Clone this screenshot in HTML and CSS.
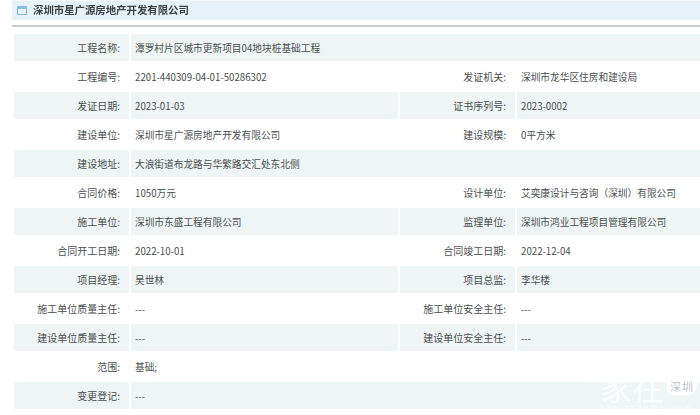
FILE: index.html
```html
<!DOCTYPE html>
<html lang="zh">
<head>
<meta charset="utf-8">
<title>深圳市星广源房地产开发有限公司</title>
<link rel="stylesheet" href="styles.css">
</head>
<body>
<div class="page">
  <header class="head">
    <svg class="icon" width="10" height="9" viewBox="0 0 10 9"><rect x="0" y="0" width="10" height="9" rx="1" fill="#7fbfe6"/><rect x="1" y="3" width="8" height="5" fill="#eef2f5"/></svg>
    <h1 class="title">深圳市星广源房地产开发有限公司</h1>
  </header>
  <div class="rule"></div>
  <table class="info">
    <colgroup><col class="c-l"><col class="c-v"><col class="c-l"><col></colgroup>
    <tbody>
      <tr><th>工程名称:</th><td colspan="3">潭罗村片区城市更新项目04地块桩基础工程</td></tr>
      <tr><th>工程编号:</th><td>2201-440309-04-01-50286302</td><th>发证机关:</th><td>深圳市龙华区住房和建设局</td></tr>
      <tr><th>发证日期:</th><td>2023-01-03</td><th>证书序列号:</th><td>2023-0002</td></tr>
      <tr><th>建设单位:</th><td>深圳市星广源房地产开发有限公司</td><th>建设规模:</th><td>0平方米</td></tr>
      <tr><th>建设地址:</th><td colspan="3">大浪街道布龙路与华繁路交汇处东北侧</td></tr>
      <tr><th>合同价格:</th><td>1050万元</td><th>设计单位:</th><td>艾奕康设计与咨询（深圳）有限公司</td></tr>
      <tr><th>施工单位:</th><td>深圳市东盛工程有限公司</td><th>监理单位:</th><td>深圳市鸿业工程项目管理有限公司</td></tr>
      <tr><th>合同开工日期:</th><td>2022-10-01</td><th>合同竣工日期:</th><td>2022-12-04</td></tr>
      <tr><th>项目经理:</th><td>吴世林</td><th>项目总监:</th><td>李华楼</td></tr>
      <tr><th>施工单位质量主任:</th><td>---</td><th>施工单位安全主任:</th><td>---</td></tr>
      <tr><th>建设单位质量主任:</th><td>---</td><th>建设单位安全主任:</th><td>---</td></tr>
      <tr><th>范围:</th><td colspan="3">基础;</td></tr>
      <tr><th>变更登记:</th><td colspan="3">---</td></tr>
    </tbody>
  </table>
  <div class="mark">
    <div class="mark-top">
      <span class="mark-main">家在</span>
      <span class="mark-city">深圳</span>
    </div>
    <span class="mark-url">bbs.szhome.com</span>
  </div>
</div>
</body>
</html>
```
FILE: styles.css
```css
html, body {
  margin: 0;
  padding: 0;
  background: #fff;
}
.page {
  position: relative;
  width: 700px;
  height: 415px;
  overflow: hidden;
  font-family: "Noto Sans CJK SC", "Liberation Sans", sans-serif;
  color: #4a4f50;
}
.head {
  display: flex;
  align-items: center;
  gap: 6px;
  height: 20px;
  margin-left: 12px;
  padding-left: 5px;
  background: #e6f1f9;
  box-shadow: inset 0 1px 0 #f2f8fc;
}
.icon {
  flex: none;
}
.title {
  margin: 0;
  font-size: 10.4px;
  font-weight: 700;
  color: #3c4244;
  line-height: 16px;
  filter: blur(.25px);
}
.rule {
  height: 2px;
  margin: 5px 0 0 12px;
  background: #c9cccc;
}
.info {
  width: 690px;
  margin: 5px 0 0 12px;
  border-collapse: separate;
  border-spacing: 2px;
  table-layout: fixed;
  font-size: 9.7px;
}
.c-l { width: 115px; }
.c-v { width: 267px; }
.info th, .info td {
  height: 27px;
  padding: 0;
  font-weight: 400;
  white-space: nowrap;
}
.info th {
  text-align: right;
  padding-right: 9px;
  box-sizing: border-box;
  font-size: 10px;
}
.info td {
  padding-left: 4px;
}
.info tr:nth-child(odd) th,
.info tr:nth-child(odd) td {
  background: #eef5f4;
}
.mark {
  position: absolute;
  left: 600px;
  top: 368px;
  width: 98px;
  color: #fff;
}
.mark-top {
  display: flex;
  align-items: center;
  gap: 3px;
}
.mark-main {
  font-size: 32px;
  line-height: 36px;
  opacity: .85;
}
.mark-city {
  padding: 2px 3px;
  border-radius: 6px 6px 10px 6px;
  background: #fff;
  color: #bcc4c4;
  font-size: 11px;
  line-height: 14px;
  letter-spacing: 1px;
  white-space: nowrap;
}
.mark-url {
  display: block;
  font-family: "Liberation Sans", sans-serif;
  font-size: 9px;
  line-height: 8px;
  letter-spacing: 1.8px;
  white-space: nowrap;
  opacity: .8;
}
```
